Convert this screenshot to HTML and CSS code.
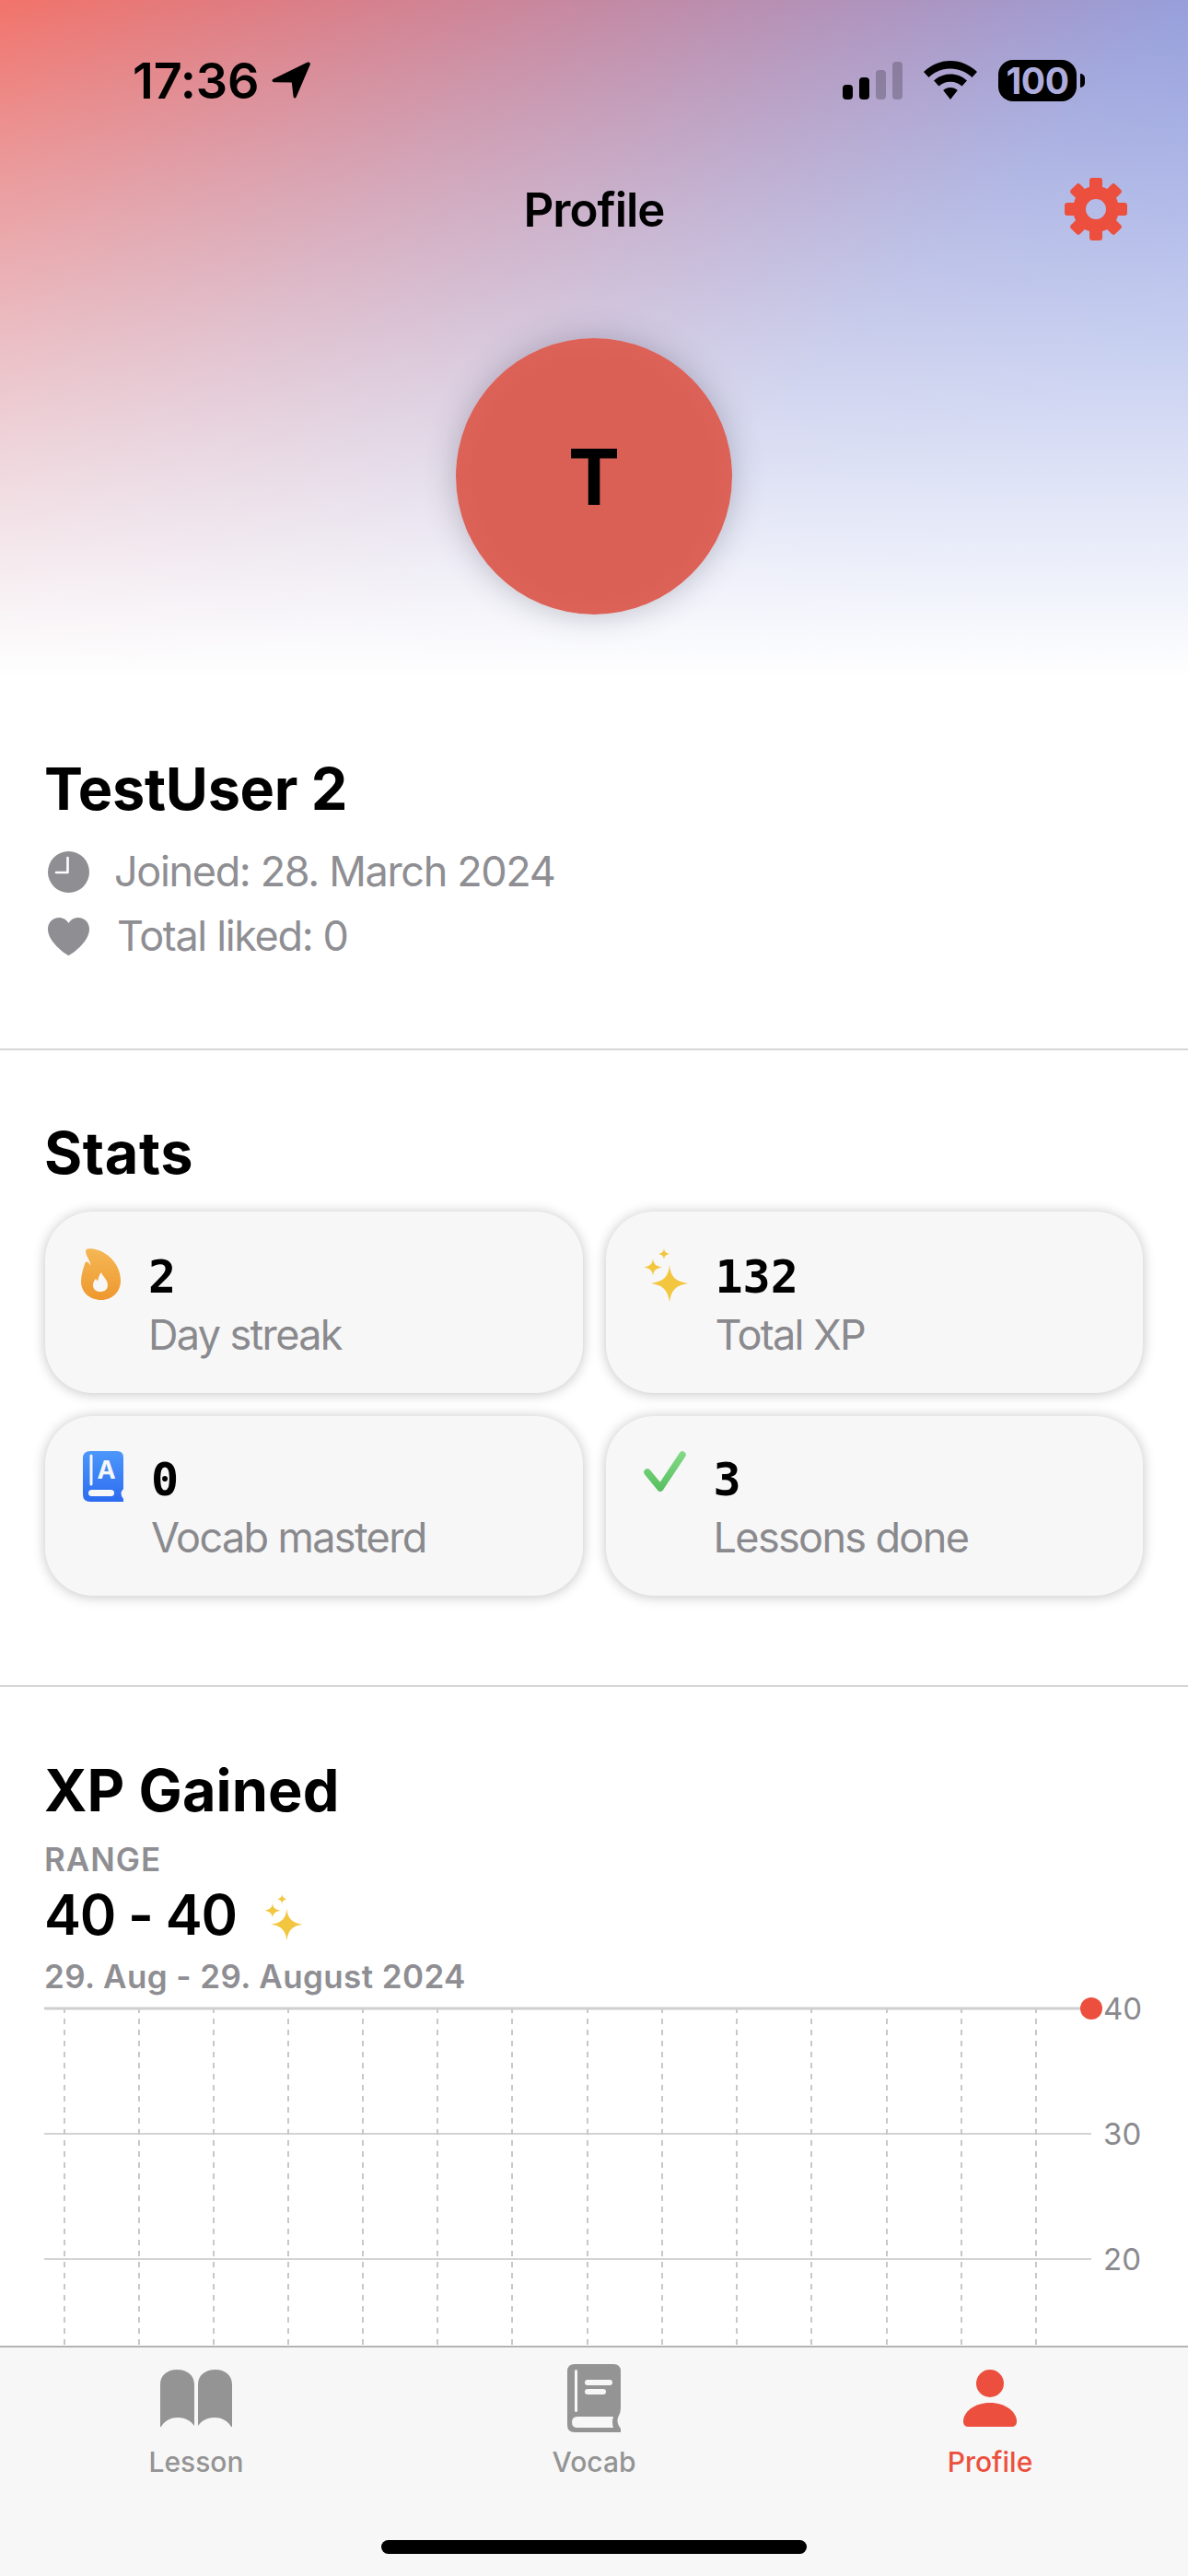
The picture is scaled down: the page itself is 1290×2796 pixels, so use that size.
FILE: index.html
```html
<!DOCTYPE html>
<html lang="en">
<head>
    <meta charset="UTF-8">
    <meta name="viewport" content="width=device-width, initial-scale=1.0">
    <title>Profile</title>
    <link rel="stylesheet" href="styles.css">
</head>
<body>
    <svg class="defs" width="0" height="0">
        <defs>
            <linearGradient id="fireFill" x1="0" y1="0" x2="0" y2="1">
                <stop offset="0" stop-color="#f5b755"/>
                <stop offset="1" stop-color="#ee982e"/>
            </linearGradient>
            <linearGradient id="bookFill" x1="0" y1="0" x2="0" y2="1">
                <stop offset="0" stop-color="#4c97fb"/>
                <stop offset="1" stop-color="#2c6cf0"/>
            </linearGradient>
            <linearGradient id="checkFill" gradientUnits="userSpaceOnUse" x1="0" y1="0" x2="0" y2="44">
                <stop offset="0" stop-color="#84da88"/>
                <stop offset="1" stop-color="#56bf5e"/>
            </linearGradient>
            <symbol id="sparkles" viewBox="0 0 48 58">
                <path d="M28 18C29 31 35 36 48 38C35 40 30 45 28 58C26 45 21 40 8 38C21 36 27 31 28 18Z"/>
                <path d="M10 11C10.5 17 13 19 20 20.500C13 22 10.500 24 10 30C9.500 24 7 22 0 20.500C7 19 9.500 17 10 11Z"/>
                <path d="M22 0C22.400 3.500 24 5 28 6C24 7 22.400 8.500 22 12C21.600 8.500 20 7 16 6C20 5 21.600 3.500 22 0Z"/>
            </symbol>
        </defs>
    </svg>

    <div class="screen">
        <header class="hero">
            <div class="status-bar">
                <div class="status-time">
                    <span>17:36</span>
                    <svg class="location-arrow" viewBox="0 0 42 40" width="42" height="40">
                        <path d="M38.500 .8C41 -.3 42.500 1.300 41.500 3.800L27 37.500C25.800 40.500 23.800 40 23.500 37.300L21.800 22.600L3 22.300C.2 22.200 -.4 19.800 2.200 18.500Z"/>
                    </svg>
                </div>
                <div class="status-icons">
                    <div class="signal">
                        <span class="bar bar-1"></span>
                        <span class="bar bar-2"></span>
                        <span class="bar bar-3 off"></span>
                        <span class="bar bar-4 off"></span>
                    </div>
                    <svg class="wifi" viewBox="0 0 58 42" width="58" height="42">
                        <path d="M29 0C40 0 50 4.500 58 12L52.500 18C46 12 38 8.500 29 8.500C20 8.500 12 12 5.500 18L0 12C8 4.500 18 0 29 0Z"/>
                        <path d="M29 14.500C36 14.500 42 17 47 21.500L41.500 27.500C38 24.500 34 22.800 29 22.800C24 22.800 20 24.500 16.500 27.500L11 21.500C16 17 22 14.500 29 14.500Z"/>
                        <path d="M29 29C32 29 34.700 30 36.800 32L29 42L21.200 32C23.300 30 26 29 29 29Z"/>
                    </svg>
                    <div class="battery">
                        <span class="battery-body">100</span>
                        <span class="battery-nub"></span>
                    </div>
                </div>
            </div>

            <div class="nav-bar">
                <span></span>
                <h1 class="nav-title">Profile</h1>
                <svg class="gear" viewBox="-35 -35 70 70" width="70" height="70">
                    <circle r="18" class="gear-ring"/>
                    <rect class="gear-tooth" x="-7" y="-34" width="14" height="16" rx="3"/>
                    <rect class="gear-tooth" x="-7" y="-34" width="14" height="16" rx="3" transform="rotate(45)"/>
                    <rect class="gear-tooth" x="-7" y="-34" width="14" height="16" rx="3" transform="rotate(90)"/>
                    <rect class="gear-tooth" x="-7" y="-34" width="14" height="16" rx="3" transform="rotate(135)"/>
                    <rect class="gear-tooth" x="-7" y="-34" width="14" height="16" rx="3" transform="rotate(180)"/>
                    <rect class="gear-tooth" x="-7" y="-34" width="14" height="16" rx="3" transform="rotate(225)"/>
                    <rect class="gear-tooth" x="-7" y="-34" width="14" height="16" rx="3" transform="rotate(270)"/>
                    <rect class="gear-tooth" x="-7" y="-34" width="14" height="16" rx="3" transform="rotate(315)"/>
                </svg>
            </div>

            <div class="avatar">T</div>
        </header>

        <section class="section user-info">
            <h2 class="title">TestUser 2</h2>
            <div class="meta-row meta-joined">
                <svg class="meta-icon" viewBox="0 0 45 45" width="45" height="45">
                    <circle cx="22.500" cy="22.500" r="22.500" fill="#8e8e93"/>
                    <path d="M21.500 7V23H9" fill="none" stroke="#fff" stroke-width="2.600" stroke-linecap="round" stroke-linejoin="round"/>
                </svg>
                <span>Joined: 28. March 2024</span>
            </div>
            <div class="meta-row meta-liked">
                <svg class="meta-icon" viewBox="0 0 45 41" width="45" height="41">
                    <path fill="#8e8e93" d="M22.500 41C21 41 0 27 0 12.500C0 5 5.500 0 12 0C16.500 0 20.300 2.300 22.500 6C24.700 2.300 28.500 0 33 0C39.500 0 45 5 45 12.500C45 27 24 41 22.500 41Z"/>
                </svg>
                <span>Total liked: 0</span>
            </div>
        </section>

        <section class="section stats">
            <h2 class="title">Stats</h2>
            <div class="stat-grid">
                <div class="stat-card">
                    <svg class="stat-icon fire-icon" viewBox="0 0 43 56" width="43" height="56">
                        <path fill="url(#fireFill)" d="M5 3C5 .5 8 0 11 .3C28 2 43 17 43 35C43 47 34 56 22 56C9 56 0 47 0 36C0 29 2 23 4 17C4.500 14 7 14 8 15.500L10.500 18.500C10 13 5 8 5 3Z"/>
                        <path fill="#f7f7f7" d="M22 26C23 30 29 34 29 40C29 44.500 25.500 47 21 47C16.500 47 13 44.500 13 40C13 37 14.500 34.500 16 33L18 35.500C19 32 20 28 22 26Z"/>
                    </svg>
                    <div class="stat-text">
                        <div class="stat-value">2</div>
                        <div class="stat-label">Day streak</div>
                    </div>
                </div>
                <div class="stat-card">
                    <svg class="stat-icon sparkle-icon" width="48" height="58"><use href="#sparkles"/></svg>
                    <div class="stat-text">
                        <div class="stat-value">132</div>
                        <div class="stat-label">Total XP</div>
                    </div>
                </div>
                <div class="stat-card">
                    <svg class="stat-icon" viewBox="0 0 44 55" width="44" height="55">
                        <path fill="url(#bookFill)" d="M8 0H37Q44 0 44 7V41Q39 46 44 52V55H8Q0 55 0 47V8Q0 0 8 0Z"/>
                        <path d="M9 5V36" stroke="#f7f7f7" stroke-width="3" stroke-linecap="round"/>
                        <text class="book-letter" x="25.500" y="30">A</text>
                        <rect x="6" y="42" width="28" height="7" rx="3.500" fill="#f7f7f7"/>
                    </svg>
                    <div class="stat-text">
                        <div class="stat-value">0</div>
                        <div class="stat-label">Vocab masterd</div>
                    </div>
                </div>
                <div class="stat-card">
                    <svg class="stat-icon" viewBox="0 0 46 44" width="46" height="44">
                        <path d="M4 23L18 40L42 4" fill="none" stroke="url(#checkFill)" stroke-width="7.500" stroke-linecap="round" stroke-linejoin="round"/>
                    </svg>
                    <div class="stat-text">
                        <div class="stat-value">3</div>
                        <div class="stat-label">Lessons done</div>
                    </div>
                </div>
            </div>
        </section>

        <section class="section xp">
            <h2 class="title">XP Gained</h2>
            <div class="range-label">RANGE</div>
            <div class="range-value">
                <span>40 - 40</span>
                <svg class="sparkle-icon range-sparkle" width="42" height="50"><use href="#sparkles"/></svg>
            </div>
            <div class="range-dates">29. Aug - 29. August 2024</div>

            <svg class="chart" width="1290" height="380" viewBox="0 0 1290 380">
                <line class="grid-y" x1="70" y1="0" x2="70" y2="380"/>
                <line class="grid-y" x1="151" y1="0" x2="151" y2="380"/>
                <line class="grid-y" x1="232" y1="0" x2="232" y2="380"/>
                <line class="grid-y" x1="313" y1="0" x2="313" y2="380"/>
                <line class="grid-y" x1="394" y1="0" x2="394" y2="380"/>
                <line class="grid-y" x1="475" y1="0" x2="475" y2="380"/>
                <line class="grid-y" x1="556" y1="0" x2="556" y2="380"/>
                <line class="grid-y" x1="638" y1="0" x2="638" y2="380"/>
                <line class="grid-y" x1="719" y1="0" x2="719" y2="380"/>
                <line class="grid-y" x1="800" y1="0" x2="800" y2="380"/>
                <line class="grid-y" x1="881" y1="0" x2="881" y2="380"/>
                <line class="grid-y" x1="963" y1="0" x2="963" y2="380"/>
                <line class="grid-y" x1="1044" y1="0" x2="1044" y2="380"/>
                <line class="grid-y" x1="1125" y1="0" x2="1125" y2="380"/>
                <line class="grid-x grid-top" x1="48" y1="1" x2="1185" y2="1"/>
                <line class="grid-x" x1="48" y1="137" x2="1185" y2="137"/>
                <line class="grid-x" x1="48" y1="273" x2="1185" y2="273"/>
                <circle class="chart-dot" cx="1185" cy="1" r="12"/>
                <text class="chart-label" x="1198" y="13">40</text>
                <text class="chart-label" x="1198" y="149">30</text>
                <text class="chart-label" x="1198" y="285">20</text>
            </svg>
        </section>

        <nav class="tab-bar">
            <div class="tabs">
                <div class="tab">
                    <div class="tab-icon">
                        <svg viewBox="0 0 78 62" width="78" height="62">
                            <path d="M0 16C0 6 8 0 18 0C29 0 37 6 37 16V61C33 55 26 52 19 52C12 52 5 55 1 62H0Z"/>
                            <path d="M78 16C78 6 70 0 60 0C49 0 41 6 41 16V61C45 55 52 52 59 52C66 52 73 55 77 62H78Z"/>
                        </svg>
                    </div>
                    <span>Lesson</span>
                </div>
                <div class="tab">
                    <div class="tab-icon">
                        <svg viewBox="0 0 59 74" width="59" height="74">
                            <path d="M8 0H50Q58 0 58 8V48Q58 53 55 58Q53 64 58 70V74H8Q0 74 0 66V8Q0 0 8 0Z"/>
                            <path class="tab-cut" d="M5 63Q5 57 11 57H50Q48 63 50 69H11Q5 69 5 63Z"/>
                            <rect class="tab-cut" x="8" y="6" width="3" height="46" rx="1.500"/>
                            <rect class="tab-cut" x="19" y="17" width="30" height="6" rx="3"/>
                            <rect class="tab-cut" x="19" y="27" width="23" height="6" rx="3"/>
                        </svg>
                    </div>
                    <span>Vocab</span>
                </div>
                <div class="tab active">
                    <div class="tab-icon">
                        <svg viewBox="0 0 58 62" width="58" height="62">
                            <circle cx="29" cy="15" r="15"/>
                            <path d="M0 56C0 46 12 36 29 36C46 36 58 46 58 56C58 60 56 62 52 62H6C2 62 0 60 0 56Z"/>
                        </svg>
                    </div>
                    <span>Profile</span>
                </div>
            </div>
            <div class="home-indicator"></div>
        </nav>
    </div>
</body>
</html>
```

FILE: styles.css
```css
* {
    box-sizing: border-box;
}
body {
    margin: 0;
    font-family: Inter, "Noto Sans", sans-serif;
    color: #000;
    background-color: #fff;
}
.defs {
    position: absolute;
}
.screen {
    position: relative;
    width: 1290px;
    height: 2796px;
    overflow: hidden;
    background-color: #fff;
}

/* top gradient area */
.hero {
    height: 735px;
    padding-top: 60px;
    background:
        linear-gradient(to bottom, rgba(255, 255, 255, 0) 0%, rgba(255, 255, 255, 0.4) 41%, #fff 100%),
        linear-gradient(135deg, #f2736a 0%, #979fdb 64%, #90a0e2 80%);
}
.status-bar {
    display: flex;
    justify-content: space-between;
    align-items: center;
    height: 54px;
    padding: 0 112px 0 144px;
}
.status-time {
    display: flex;
    align-items: center;
    gap: 14px;
    font-size: 54px;
    font-weight: 600;
    letter-spacing: -0.2px;
}
.status-icons {
    display: flex;
    align-items: center;
    gap: 23px;
}
.signal {
    display: flex;
    align-items: flex-end;
    gap: 7px;
    height: 41px;
}
.bar {
    width: 11px;
    border-radius: 4px;
    background-color: #000;
}
.bar-1 { height: 16px; }
.bar-2 { height: 24px; }
.bar-3 { height: 32px; }
.bar-4 { height: 41px; }
.bar.off {
    opacity: 0.22;
}
.battery {
    display: flex;
    align-items: center;
    gap: 4px;
}
.battery-body {
    width: 85px;
    height: 45px;
    border-radius: 16px;
    background-color: #000;
    color: #adacdc;
    font-size: 39px;
    font-weight: 700;
    line-height: 45px;
    text-align: center;
    letter-spacing: -0.5px;
}
.battery-nub {
    width: 5px;
    height: 15px;
    border-radius: 0 8px 8px 0;
    background-color: #000;
}

.nav-bar {
    display: grid;
    grid-template-columns: 1fr auto 1fr;
    align-items: center;
    height: 70px;
    margin-top: 78px;
    padding: 0 65px;
}
.nav-title {
    margin: 0;
    font-size: 51px;
    font-weight: 600;
    letter-spacing: -1px;
}
.gear {
    justify-self: end;
}
.gear-ring {
    fill: none;
    stroke: #ec4f3d;
    stroke-width: 14;
}
.gear-tooth {
    fill: #ec4f3d;
}
.avatar {
    display: flex;
    align-items: center;
    justify-content: center;
    width: 300px;
    height: 300px;
    margin: 105px auto 0;
    border-radius: 50%;
    background: radial-gradient(circle, #da6056 60%, #e3695f 100%);
    box-shadow: 0 0 34px rgba(60, 60, 80, 0.3);
    font-size: 84px;
    font-weight: 700;
}

/* content sections */
.section {
    padding: 0 48px;
}
.title {
    margin: 0;
    font-size: 63px;
    font-weight: 700;
    line-height: 76px;
    letter-spacing: -0.3px;
}
.user-info {
    height: 405px;
    padding-top: 83px;
    border-bottom: 2px solid #d6d6d6;
}
.meta-row {
    display: flex;
    align-items: center;
    font-size: 45px;
    line-height: 54px;
    letter-spacing: -1.35px;
    color: #8e8e93;
}
.meta-row .meta-icon {
    flex-shrink: 0;
    margin-left: 4px;
}
.meta-joined {
    gap: 27px;
    margin-top: 25px;
}
.meta-liked {
    gap: 30px;
    margin-top: 16px;
}

.stats {
    height: 691px;
    padding: 73px 49px 0;
    border-bottom: 2px solid #d6d6d6;
}
.stats .title {
    margin-left: -1px;
    letter-spacing: 0.6px;
}
.stat-grid {
    display: grid;
    grid-template-columns: 1fr 1fr;
    grid-template-rows: 197px 195px;
    gap: 25px;
    margin-top: 26px;
}
.stat-card {
    display: flex;
    align-items: flex-start;
    gap: 30px;
    padding: 40px 39px 0;
    border-radius: 52px;
    background-color: #f7f7f7;
    box-shadow: 0 1px 14px rgba(0, 0, 0, 0.24);
}
.stat-card:nth-child(n+3) {
    padding-top: 38px;
}
.stat-icon {
    flex-shrink: 0;
    margin-left: 2px;
}
.stat-icon.fire-icon {
    margin-left: 0;
}
.sparkle-icon {
    fill: #f3c640;
}
.book-letter {
    fill: #f7f7f7;
    font-size: 27px;
    font-weight: 700;
    text-anchor: middle;
}
.stat-value {
    font-family: "DejaVu Sans Mono", monospace;
    font-size: 50px;
    font-weight: 700;
    line-height: 54px;
    margin-top: 4px;
}
.stat-label {
    margin-top: 9px;
    font-size: 45px;
    line-height: 54px;
    letter-spacing: -1.65px;
    color: #8a8a8e;
}

.xp {
    padding-top: 74px;
}
.xp .title {
    letter-spacing: 0.1px;
}
.range-label {
    margin-top: 16px;
    font-size: 35px;
    font-weight: 600;
    line-height: 42px;
    letter-spacing: 1px;
    color: #8e8e93;
}
.range-value {
    display: flex;
    align-items: center;
    gap: 30px;
    margin-top: 3px;
    font-size: 60px;
    font-weight: 600;
    line-height: 72px;
    letter-spacing: -1.2px;
}
.range-sparkle {
    margin-top: 6px;
}
.range-dates {
    margin-top: 10px;
    font-size: 35px;
    font-weight: 600;
    line-height: 42px;
    letter-spacing: 0.4px;
    color: #8e8e93;
}
.chart {
    display: block;
    margin: 13px 0 0 -48px;
    overflow: visible;
}
.grid-y {
    stroke: #c8c8c8;
    stroke-width: 2;
    stroke-dasharray: 6 6;
}
.grid-x {
    stroke: #c4c4c4;
    stroke-width: 1.5;
}
.grid-top {
    stroke: #cfcfcf;
    stroke-width: 3;
}
.chart-dot {
    fill: #ec4f3d;
}
.chart-label {
    fill: #8a8a8e;
    font-size: 33px;
}

/* tab bar sits over the chart */
.tab-bar {
    position: absolute;
    left: 0;
    right: 0;
    bottom: 0;
    display: flex;
    flex-direction: column;
    height: 250px;
    background-color: #f7f7f7;
    border-top: 2px solid #b4b4b4;
}
.tabs {
    display: grid;
    grid-template-columns: repeat(3, 1fr);
    padding-top: 18px;
}
.tab {
    display: flex;
    flex-direction: column;
    align-items: center;
    font-size: 30px;
    font-weight: 500;
    line-height: 36px;
    color: #949494;
}
.tab:first-child {
    padding-right: 4px;
}
.tab-icon {
    display: flex;
    align-items: center;
    height: 74px;
    margin-bottom: 14px;
    fill: #949494;
}
.tab-cut {
    fill: #f7f7f7;
}
.tab.active {
    color: #ec4f3d;
}
.tab.active .tab-icon {
    fill: #ec4f3d;
}
.home-indicator {
    width: 462px;
    height: 15px;
    margin: auto auto 24px;
    border-radius: 8px;
    background-color: #000;
}
```
